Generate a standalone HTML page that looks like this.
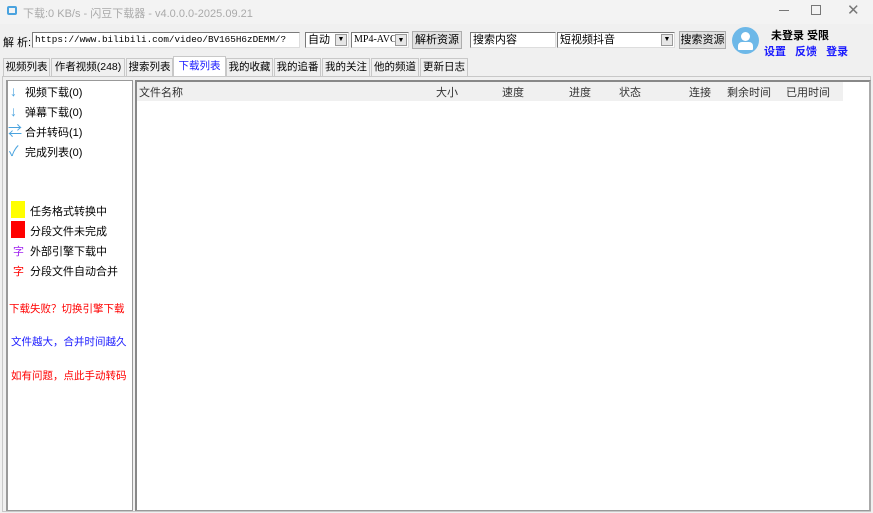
<!DOCTYPE html>
<html><head><meta charset="utf-8"><style>
*{margin:0;padding:0;box-sizing:border-box}
body{width:873px;height:513px;background:#f0f0f0;font-family:"Liberation Sans","Noto Sans CJK SC",sans-serif;font-size:11px;color:#000;position:relative;overflow:hidden}
.a{position:absolute;white-space:nowrap}
.in{position:absolute;background:#fff;border:1px solid #7a7a7a;border-right-color:#ddd;border-bottom-color:#ddd;height:16px;line-height:14px;padding-left:2px;overflow:hidden}
.btn{position:absolute;background:#e1e1e1;border:1px solid #adadad;height:18px;line-height:16px;text-align:center}
.dd{position:absolute;right:1px;top:1px;width:12px;height:12px;background:#e6e6e6;border:1px solid #999;font-size:7px;line-height:10px;text-align:center}
.tab{position:absolute;top:58px;height:18px;border:1px solid #c8c8c8;border-bottom:none;background:#f0f0f0;line-height:16px;text-align:center;font-size:10.5px}
.h{position:absolute;top:84px;color:#333}
.ic{position:absolute;color:#4aa3df;font-size:14px;line-height:14px}
</style></head><body>
<div class="a" style="left:0;top:0;width:873px;height:24px;background:#f3f3f3"></div>
<div class="a" style="left:7px;top:6px;width:10px;height:9px;border:2px solid #4aa3df;border-radius:2px"></div>
<div class="a" style="left:23px;top:5px;color:#aaa;font-size:11px">下载:0 KB/s - 闪豆下载器 - v4.0.0.0-2025.09.21</div>
<div class="a" style="left:779px;top:10px;width:10px;height:1px;background:#777"></div>
<div class="a" style="left:811px;top:5px;width:10px;height:10px;border:1px solid #777"></div>
<div class="a" style="left:847px;top:1px;color:#777;font-size:15px">✕</div>

<div class="a" style="left:3px;top:34px">解 析:</div>
<div class="in" style="left:32px;top:32px;width:268px;font-family:'Liberation Mono',monospace;font-size:9.3px">https://www.bilibili.com/video/BV165H6zDEMM/?</div>
<div class="in" style="left:305px;top:32px;width:44px">自动<div class="dd">▼</div></div>
<div class="in" style="left:351px;top:32px;width:58px;font-family:'Liberation Serif',serif;font-size:10px">MP4-AVC<div class="dd">▼</div></div>
<div class="btn" style="left:412px;top:31px;width:50px">解析资源</div>
<div class="in" style="left:470px;top:32px;width:86px">搜索内容</div>
<div class="in" style="left:557px;top:32px;width:118px">短视频抖音<div class="dd">▼</div></div>
<div class="btn" style="left:679px;top:31px;width:47px">搜索资源</div>
<div class="a" style="left:732px;top:27px;width:27px;height:27px;border-radius:50%;background:#6db8e8;overflow:hidden">
<div class="a" style="left:9px;top:5px;width:9px;height:9px;border-radius:50%;background:#fff"></div>
<div class="a" style="left:6px;top:15px;width:15px;height:8px;border-radius:4px 4px 1px 1px;background:#fff"></div></div>
<div class="a" style="left:771px;top:27px;font-weight:bold">未登录 受限</div>
<div class="a" style="left:764px;top:43px;font-weight:bold;color:#1a1aff;word-spacing:6px">设置 反馈 登录</div>

<div class="tab" style="left:3px;width:47px">视频列表</div>
<div class="tab" style="left:51px;width:74px">作者视频(248)</div>
<div class="tab" style="left:126px;width:47px">搜索列表</div>
<div class="tab" style="left:173px;top:56px;height:21px;width:53px;background:#fff;color:#1a1aff;line-height:19px">下载列表</div>
<div class="tab" style="left:226px;width:47px">我的收藏</div>
<div class="tab" style="left:274px;width:47px">我的追番</div>
<div class="tab" style="left:322px;width:48px">我的关注</div>
<div class="tab" style="left:371px;width:48px">他的频道</div>
<div class="tab" style="left:420px;width:48px">更新日志</div>
<div class="a" style="left:2px;top:76px;width:869px;height:436px;border:1px solid #c8c8c8;background:#f0f0f0"></div>

<div class="a" style="left:6px;top:80px;width:127px;height:431px;background:#fff;border:1px solid #999;border-left:2px solid #999"></div>
<div class="a" style="left:135px;top:80px;width:736px;height:431px;background:#fff;border:1px solid #999;border-top:2px solid #888;border-left:2px solid #888;border-right:2px solid #aaa"></div>
<div class="a" style="left:137px;top:82px;width:706px;height:19px;background:#f0f0f0"></div>
<div class="h" style="left:139px">文件名称</div>
<div class="h" style="left:436px">大小</div>
<div class="h" style="left:502px">速度</div>
<div class="h" style="left:569px">进度</div>
<div class="h" style="left:619px">状态</div>
<div class="h" style="left:689px">连接</div>
<div class="h" style="left:727px">剩余时间</div>
<div class="h" style="left:786px">已用时间</div>

<div class="ic" style="left:10px;top:84px">↓</div><div class="a" style="left:25px;top:84px">视频下载(0)</div>
<div class="ic" style="left:10px;top:104px">↓</div><div class="a" style="left:25px;top:104px">弹幕下载(0)</div>
<div class="ic" style="left:8px;top:124px">⇄</div><div class="a" style="left:25px;top:124px">合并转码(1)</div>
<div class="ic" style="left:9px;top:144px">✓</div><div class="a" style="left:25px;top:144px">完成列表(0)</div>
<div class="a" style="left:11px;top:201px;width:14px;height:17px;background:#ff0"></div><div class="a" style="left:30px;top:203px">任务格式转换中</div>
<div class="a" style="left:11px;top:221px;width:14px;height:17px;background:#f00"></div><div class="a" style="left:30px;top:223px">分段文件未完成</div>
<div class="a" style="left:13px;top:243px;color:#a020f0">字</div><div class="a" style="left:30px;top:243px">外部引擎下载中</div>
<div class="a" style="left:13px;top:263px;color:#f00">字</div><div class="a" style="left:30px;top:263px">分段文件自动合并</div>
<div class="a" style="left:9px;top:301px;color:#f00;font-size:10.5px">下载失败？切换引擎下载</div>
<div class="a" style="left:11px;top:334px;color:#1a1aff;font-size:10.5px">文件越大，合并时间越久</div>
<div class="a" style="left:11px;top:368px;color:#f00;font-size:10.5px">如有问题，点此手动转码</div>
</body></html>
